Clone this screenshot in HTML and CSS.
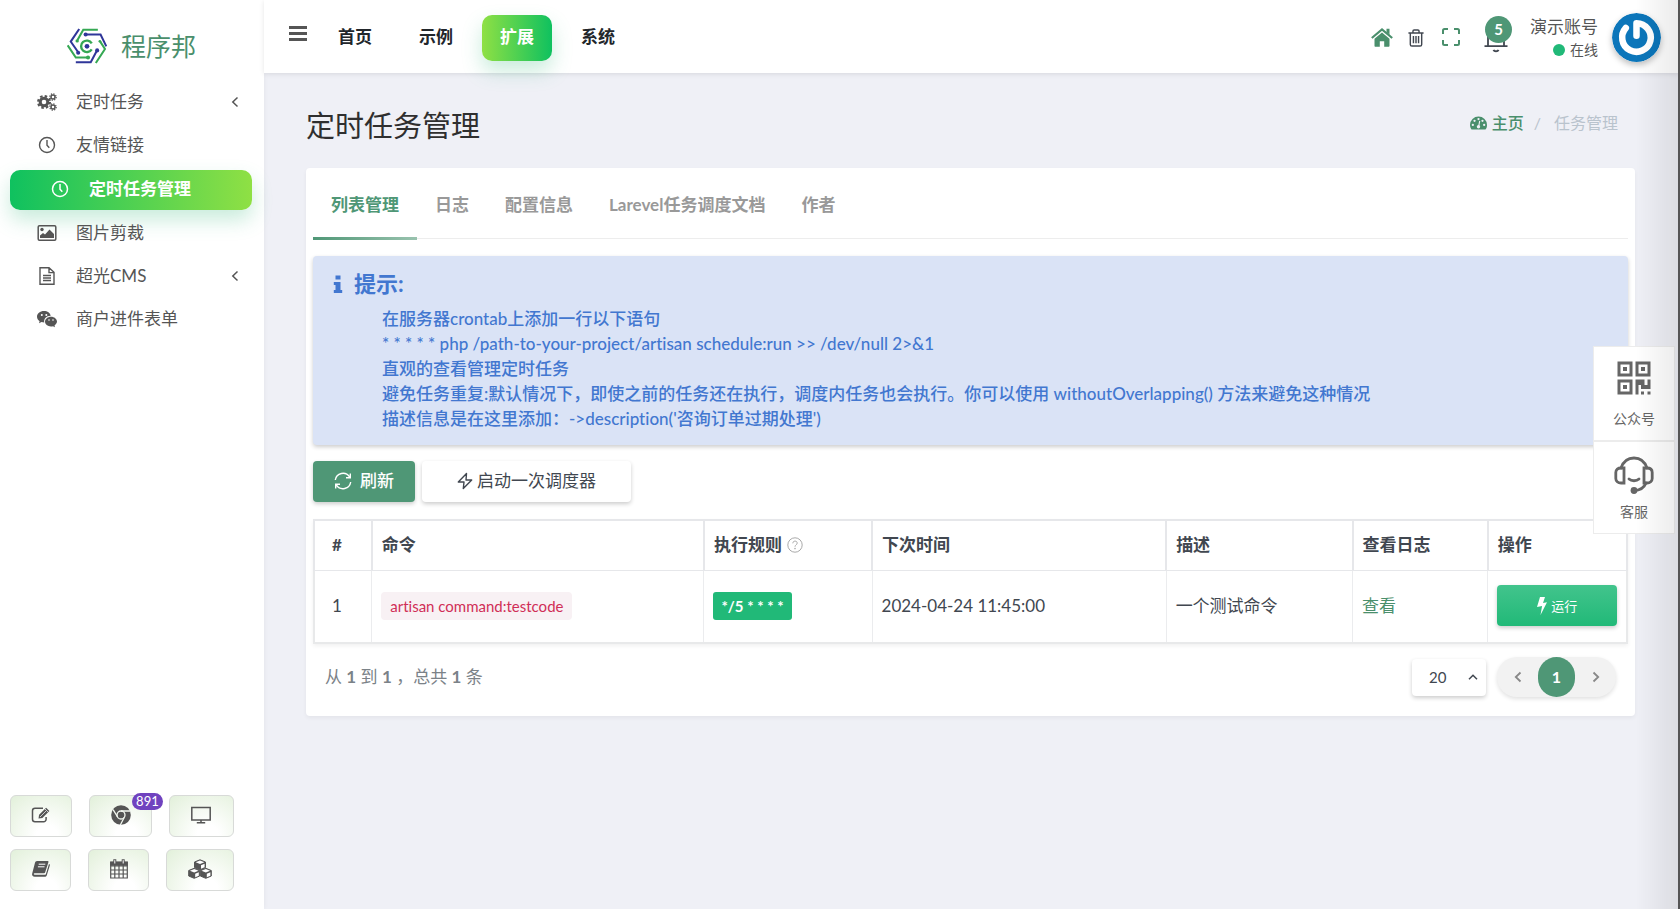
FILE: index.html
```html
<!DOCTYPE html>
<html lang="zh-CN">
<head>
<meta charset="utf-8">
<title>定时任务管理</title>
<link rel="stylesheet" href="styles.css">
</head>
<body>
<aside class="sidebar">
  <a class="brand" href="#">
    <svg class="brand-logo" viewBox="202 88 118 106" fill="none" stroke-width="6">
      <g stroke="#35a853"><path d="M293 93h-43l-17 30M204 139l24 36h33M300 128l14 22-27 41"/><path d="M275 133a17 17 0 1 0 0 18" stroke-width="7"/></g>
      <g stroke="#2f3699"><path d="M258 107h43l17 35M238 91l-25 37 21 30M228 189h44l18-34"/></g>
      <g fill="#35a853"><circle cx="232" cy="126" r="5"/><circle cx="264" cy="175" r="6"/><circle cx="299" cy="127" r="4"/></g>
      <g fill="#2f3699"><circle cx="257" cy="107" r="6"/><circle cx="235" cy="161" r="6"/><circle cx="291" cy="154" r="6"/><circle cx="261" cy="142" r="7"/></g>
    </svg>
    <span>程序邦</span>
  </a>
  <nav class="menu">
    <a class="menu-item" href="#">
      <svg class="icon" viewBox="0 0 20 18"><g fill="none" stroke="currentColor"><circle cx="7" cy="9" r="3.800" stroke-width="3"/><circle cx="7" cy="9" r="5.900" stroke-width="2.200" stroke-dasharray="2.500 2.130"/><circle cx="16" cy="4" r="2" stroke-width="1.500"/><circle cx="16" cy="4" r="3.200" stroke-width="1.200" stroke-dasharray="1.300 1.200"/><circle cx="16" cy="14" r="2" stroke-width="1.500"/><circle cx="16" cy="14" r="3.200" stroke-width="1.200" stroke-dasharray="1.300 1.200"/></g></svg>
      <span>定时任务</span>
      <svg class="chevron" viewBox="0 0 8 12"><path d="M6.500 1.500L1.800 6l4.700 4.500" fill="none" stroke="currentColor" stroke-width="1.500"/></svg>
    </a>
    <a class="menu-item" href="#">
      <svg class="icon" viewBox="0 0 20 18"><g fill="none" stroke="currentColor" stroke-width="1.400"><circle cx="10" cy="9" r="7.500"/><path d="M10 4v5.200l2.300 2.600"/></g></svg>
      <span>友情链接</span>
    </a>
    <a class="menu-item active" href="#">
      <svg class="icon" viewBox="0 0 20 18"><g fill="none" stroke="currentColor" stroke-width="1.500"><circle cx="10" cy="9" r="7.500"/><path d="M10 4v5.200l2.300 2.600"/></g></svg>
      <span>定时任务管理</span>
    </a>
    <a class="menu-item" href="#">
      <svg class="icon" viewBox="0 0 20 18"><rect x="1.200" y="1.700" width="17.600" height="14.600" rx="1.200" fill="none" stroke="currentColor" stroke-width="1.500"/><circle cx="5" cy="5.500" r="1.700" fill="currentColor"/><path d="M3 14v-2.500l3-2.500 2 1.500 4.500-5 4.500 4.500v4z" fill="currentColor"/></svg>
      <span>图片剪裁</span>
    </a>
    <a class="menu-item" href="#">
      <svg class="icon" viewBox="0 0 20 18"><g fill="none" stroke="currentColor" stroke-width="1.400"><path d="M3 .8h9l5 4.500v11.900H3zM12 .8v4.800h5M6 8.500h8M6 11h8M6 13.500h8"/></g></svg>
      <span>超光CMS</span>
      <svg class="chevron" viewBox="0 0 8 12"><path d="M6.500 1.500L1.800 6l4.700 4.500" fill="none" stroke="currentColor" stroke-width="1.500"/></svg>
    </a>
    <a class="menu-item" href="#">
      <svg class="icon" viewBox="0 0 20 18"><path d="M7 1C3 1 0 3.500 0 6.700c0 1.900 1 3.400 2.600 4.500L2 13.300l2.500-1.200c.9.300 1.700.4 2.800.4-.9-3.600 2.100-6.700 6.400-6.700C13.200 3 10.500 1 7 1z" fill="currentColor"/><path d="M14 6.700c-3.300 0-6 2.200-6 4.900s2.700 4.900 6 4.900c.7 0 1.400-.2 2-.3l2 1-.5-1.800c1.500-1 2.500-2.300 2.500-3.800 0-2.700-2.700-4.900-6-4.900z" fill="currentColor"/><g fill="#fff"><circle cx="4.800" cy="5" r="1"/><circle cx="9.300" cy="5" r="1"/><circle cx="12" cy="10" r=".8"/><circle cx="16" cy="10" r=".8"/></g></svg>
      <span>商户进件表单</span>
    </a>
  </nav>
  <div class="shortcuts">
    <div class="shortcut-row">
      <button class="shortcut" type="button" aria-label="编辑"><svg viewBox="0 0 20 18"><path d="M12 2.200H4A2.500 2.500 0 0 0 1.500 4.700v8.600A2.500 2.500 0 0 0 4 15.800h8.600a2.500 2.500 0 0 0 2.500-2.500V11" fill="none" stroke="currentColor" stroke-width="1.500"/><path d="M7.500 12.500l.6-3.800 7-7 3.300 3.200-7 7z" fill="currentColor"/><path d="M14 3l3.200 3.200M9 11l6-6" stroke="#fff" stroke-width=".7"/></svg></button>
      <button class="shortcut" type="button" aria-label="浏览器"><svg class="round" viewBox="0 0 20 20"><circle cx="10" cy="10" r="9.800" fill="currentColor"/><g fill="none" stroke="#f4f9f1" stroke-width="1.300"><circle cx="10" cy="10" r="4"/><path d="M10 6h9M6.600 12L2.100 4.600M13.300 12.200L9.300 20"/></g></svg><span class="count">891</span></button>
      <button class="shortcut wide" type="button" aria-label="显示器"><svg viewBox="0 0 20 18"><path d="M.8 1.500h18.400v12.600H.8zM10 14v2.500M5.800 16.700h8.400" fill="none" stroke="currentColor" stroke-width="1.500"/></svg></button>
    </div>
    <div class="shortcut-row lower">
      <button class="shortcut" type="button" aria-label="文档"><svg viewBox="0 0 20 18"><path d="M6 1h10.500c.8 0 1.100.5.900 1.200l-3.200 10c-.2.700-.8 1-1.500 1H3.500c-1 0-1 1.600.2 1.600h10c.6 0 1-.3 1.200-.9L18 4c.8.300 1 .8.800 1.500l-3 9.700c-.3 1-1.200 1.600-2.200 1.600H3.800c-2 0-3.200-1.600-2.600-3.300L4 2.800C4.300 1.700 5 1 6 1z" fill="currentColor"/><path d="M7.700 4.200h6.600M6.900 6.800h6.600" stroke="#fff" stroke-width="1"/></svg></button>
      <button class="shortcut" type="button" aria-label="日历"><svg class="round" viewBox="0 0 20 20"><path d="M1.700 3h16.600v16H1.700zM1.700 7h16.600M1.700 11h16.600M1.700 15h16.600M5.800 6v13M10 6v13M14.200 6v13" fill="none" stroke="currentColor" stroke-width="1.200"/><path d="M1.200 2.800h17.600v4H1.200z" fill="currentColor"/><path d="M5.800.3v4.500M14.200.3v4.500" stroke="currentColor" stroke-width="3"/><path d="M5.800 1.200v3.300M14.200 1.200v3.300" stroke="#fff"/></svg></button>
      <button class="shortcut wide" type="button" aria-label="模块"><svg class="cubes" viewBox="0 0 24 20"><g fill="currentColor" stroke="currentColor" stroke-linejoin="round"><path d="M12 .8l5.500 2.200v5.500L12 11 6.500 8.500V3zM6.200 9.300L11.700 11.500V17l-5.500 2.300L.7 17v-5.500zM17.800 9.300l5.500 2.200V17l-5.500 2.300-5.500-2.300v-5.500z"/></g><g fill="#fff"><path d="M12 1.600l4.300 1.700L12 5 7.700 3.300zM6.200 10.100l4.300 1.700-4.300 1.700-4.300-1.700zM17.800 10.100l4.300 1.700-4.300 1.700-4.300-1.700zM13 6.300l3.600-1.500v3.400L13 9.800zM7.200 14.800l3.600-1.500v3.400l-3.600 1.600zM18.800 14.800l3.600-1.500v3.400l-3.600 1.600z"/></g></svg></button>
    </div>
  </div>
</aside>
<div class="page">
  <header class="topbar">
    <button class="toggle" type="button" aria-label="菜单"><svg viewBox="0 0 18 16"><path d="M0 1.500h18M0 7.500h18M0 13.500h18" stroke="currentColor" stroke-width="2.800"/></svg></button>
    <nav class="topnav">
      <a href="#">首页</a>
      <a href="#">示例</a>
      <a class="current" href="#">扩展</a>
      <a href="#">系统</a>
    </nav>
    <div class="tools">
      <a class="tool green" href="#" aria-label="主页"><svg class="home" viewBox="0 0 22 19"><path d="M11 4.600l7.500 6.200v7c0 .6-.4 1-1 1h-4.300v-5.600H8.800v5.600H4.500c-.6 0-1-.4-1-1v-7z" fill="currentColor"/><path d="M.8 10L11 1.500 21.200 10" fill="none" stroke="currentColor" stroke-width="2.200"/><path d="M15.500.8h3v6l-3-2.500z" fill="currentColor"/></svg></a>
      <a class="tool" href="#" aria-label="清空"><svg class="trash" viewBox="0 0 16 19"><path d="M0 4.200h16M4.800 4V2.200c0-.7.500-1.200 1.200-1.200h4c.7 0 1.200.5 1.200 1.200V4M2 4.500v11.800c0 1 .7 1.700 1.700 1.700h8.600c1 0 1.700-.7 1.700-1.700V4.500M5.300 7.500v7.500M8 7.500v7.500M10.700 7.500v7.500" fill="none" stroke="currentColor" stroke-width="1.500"/></svg></a>
      <a class="tool green" href="#" aria-label="全屏"><svg class="full" viewBox="0 0 18 18"><path d="M1 6V2.500Q1 1 2.500 1H6M12 1h3.500Q17 1 17 2.500V6M17 12v3.500q0 1.500-1.500 1.500H12M6 17H2.500Q1 17 1 15.500V12" fill="none" stroke="currentColor" stroke-width="2"/></svg></a>
      <a class="tool bell-link" href="#" aria-label="通知"><svg class="bell" viewBox="0 0 24 30"><path d="M4 22.500V11a8 8 0 0 1 16 0v11.500M.5 23.200h23" fill="none" stroke="currentColor" stroke-width="1.800"/><path d="M9.500 26.800c.8 2 4.200 2 5 0" fill="none" stroke="currentColor" stroke-width="2"/></svg><span class="notice">5</span></a>
      <a class="user" href="#">
        <span class="user-text"><span class="user-name">演示账号</span><span class="user-state"><i class="dot"></i>在线</span></span>
        <svg class="avatar" viewBox="0 0 48 48"><circle cx="24" cy="24" r="24" fill="#0c76ba"/><path d="M24 22.200V10a14 14 0 1 1-10.500 4.700" fill="none" stroke="#fff" stroke-width="6.400" stroke-linecap="round" stroke-linejoin="round"/></svg>
      </a>
    </div>
  </header>
  <main class="content">
    <div class="heading">
      <h1>定时任务管理</h1>
      <nav class="crumbs">
        <a href="#"><svg viewBox="0 0 18 14"><path d="M9 0a9 9 0 0 1 9 9c0 1.700-.5 3.300-1.300 4.600l-.6.400H1.900l-.6-.4A8.800 8.800 0 0 1 0 9a9 9 0 0 1 9-9z" fill="currentColor"/><g fill="#eff0f6"><circle cx="3" cy="9" r="1.200"/><circle cx="4.800" cy="4.700" r="1.200"/><circle cx="9" cy="2.800" r="1.200"/><circle cx="13.200" cy="4.700" r="1.200"/><circle cx="15" cy="9" r="1.200"/></g><path d="M10.300 4.700L9 11.500" stroke="#eff0f6" stroke-width="1.200"/><circle cx="9" cy="11" r="1.800" fill="#eff0f6"/></svg>主页</a>
        <span class="slash">/</span>
        <span>任务管理</span>
      </nav>
    </div>
    <section class="card">
      <nav class="tabs">
        <a class="selected" href="#">列表管理</a>
        <a href="#">日志</a>
        <a href="#">配置信息</a>
        <a href="#">Larevel任务调度文档</a>
        <a href="#">作者</a>
      </nav>
      <div class="alert">
        <h2><svg viewBox="0 0 10 20"><path d="M2.500 1.500h5v4h-5zM.8 8h6.700v8h1.700v3H.8v-3h1.700v-5H.8z" fill="currentColor"/></svg>提示:</h2>
        <ul>
          <li>在服务器crontab上添加一行以下语句</li>
          <li>* * * * * php /path-to-your-project/artisan schedule:run &gt;&gt; /dev/null 2&gt;&amp;1</li>
          <li>直观的查看管理定时任务</li>
          <li>避免任务重复:默认情况下，即使之前的任务还在执行，调度内任务也会执行。你可以使用 withoutOverlapping() 方法来避免这种情况</li>
          <li>描述信息是在这里添加：-&gt;description('咨询订单过期处理')</li>
        </ul>
      </div>
      <div class="actions">
        <button class="btn primary" type="button"><svg viewBox="0 0 18 18"><path d="M1.300 8a7.800 7.800 0 0 1 14.200-3.200M16.700 10a7.800 7.800 0 0 1-14.200 3.200M16.300 1.500v4.300H12M1.700 16.500v-4.300H6" fill="none" stroke="currentColor" stroke-width="1.400"/></svg>刷新</button>
        <button class="btn plain" type="button"><svg viewBox="0 0 16 18"><path d="M9.500 1.500L1.300 10H7l-.7 6.500L14.700 8H9z" fill="none" stroke="currentColor" stroke-width="1.400" stroke-linejoin="round"/></svg>启动一次调度器</button>
      </div>
      <table class="grid">
        <colgroup><col class="c1"><col class="c2"><col class="c3"><col class="c4"><col class="c5"><col class="c6"><col class="c7"></colgroup>
        <thead>
          <tr><th>#</th><th>命令</th><th><span class="with-help">执行规则<svg viewBox="0 0 16 16"><circle cx="8" cy="8" r="7.200" fill="none" stroke="currentColor"/><path d="M5.800 6.300c0-3 4.500-2.800 4.400-.2C10.200 7.800 8 7.900 8 9.700" fill="none" stroke="currentColor"/><circle cx="8" cy="11.600" r=".8" fill="currentColor"/></svg></span></th><th>下次时间</th><th>描述</th><th>查看日志</th><th>操作</th></tr>
        </thead>
        <tbody>
          <tr><td>1</td><td><code>artisan command:testcode</code></td><td><span class="rule">*/5 * * * *</span></td><td>2024-04-24 11:45:00</td><td>一个测试命令</td><td><a href="#">查看</a></td><td><button class="run" type="button"><svg viewBox="0 0 10 18"><path d="M3 0h5L6 6l4-.8L3.500 18l1.600-9L0 10z" fill="currentColor"/></svg>运行</button></td></tr>
        </tbody>
      </table>
      <div class="table-foot">
        <p>从 <b>1</b> 到 <b>1</b> ，总共 <b>1</b> 条</p>
        <div class="pager">
          <select class="per-page" aria-label="每页条数"><option>20</option></select>
          <div class="pages">
            <button type="button" aria-label="上一页"><svg viewBox="0 0 8 12"><path d="M6.500 1.500L1.800 6l4.700 4.500" fill="none" stroke="currentColor" stroke-width="1.800"/></svg></button>
            <button class="on" type="button">1</button>
            <button type="button" aria-label="下一页"><svg viewBox="0 0 8 12"><path d="M1.500 1.500L6.200 6l-4.700 4.500" fill="none" stroke="currentColor" stroke-width="1.800"/></svg></button>
          </div>
        </div>
      </div>
    </section>
  </main>
</div>
<aside class="dock">
  <a href="#"><svg viewBox="0 0 34 34"><g fill="none" stroke="currentColor" stroke-width="3"><rect x="2" y="2" width="12" height="12"/><rect x="20" y="2" width="12" height="12"/><rect x="2" y="20" width="12" height="12"/></g><g fill="currentColor"><path d="M6 6h4v4H6zM24 6h4v4h-4zM6 24h4v4H6zM18.500 18.500h9V24h3v-5.500h3V28H24v-4h-2.500v9.500h-3zM24 30.500h3v3h-3zM30.500 30.500h3v3h-3z"/></g></svg><span>公众号</span></a>
  <a href="#"><svg class="headset" viewBox="0 0 40 38"><g fill="none" stroke="currentColor" stroke-width="2.800" stroke-linecap="round"><path d="M7 12C9.500 5 14 2 20 2s10.500 3 13 10M32 27c-2 5-6 7.500-12 7.500"/><path d="M10 12v15H7c-3 0-5.200-2-5.200-4.500v-6C1.800 13.500 4 12 7 12zM30 12v15h3c3 0 5.200-2 5.200-4.500v-6C38.200 13.500 36 12 33 12zM15 23c2.500 2.300 7.500 2.300 10 0"/></g><circle cx="20" cy="34.500" r="3.400" fill="currentColor"/></svg><span>客服</span></a>
</aside>
<div class="edge"></div>
</body>
</html>
```

FILE: styles.css
```css
* { box-sizing: border-box; }
body {
  margin: 0;
  min-height: 100vh;
  display: flex;
  background: #eff0f6;
  color: #414750;
  font: 17px/24px Lato, "Noto Sans CJK SC", sans-serif;
  font-variant-ligatures: none;
}
a { color: inherit; text-decoration: none; }
button, select { font: inherit; color: inherit; border: 0; cursor: pointer; }
svg { display: block; flex: none; }
h1, h2, p, ul { margin: 0; padding: 0; }

.sidebar {
  width: 264px;
  flex: none;
  display: flex;
  flex-direction: column;
  background: #fff;
  color: #555;
  box-shadow: 0 0 5px rgba(0, 0, 0, .06);
}
.brand {
  height: 83px;
  padding: 8px 0 0 67px;
  display: flex;
  align-items: center;
  gap: 14px;
  color: #4a8f6c;
  font-size: 25px;
}
.brand-logo { width: 40px; height: 36px; }
.menu { display: flex; flex-direction: column; gap: 3px; padding: 0 12px 0 10px; }
.menu-item {
  height: 40px;
  padding: 0 13px 2px 27px;
  display: flex;
  align-items: center;
  gap: 19px;
  border-radius: 10px;
}
.icon { width: 20px; height: 18px; }
.chevron { width: 8px; height: 12px; margin-left: auto; }
.menu-item.active {
  margin: 1px 0;
  padding-left: 40px;
  color: #fff;
  font-weight: 700;
  background: linear-gradient(90deg, #0fc15f, #8fe044);
  box-shadow: 0 10px 20px rgba(60, 185, 130, .28);
}
.shortcuts {
  margin-top: auto;
  padding: 0 30px 18px 10px;
  display: flex;
  flex-direction: column;
  gap: 12px;
}
.shortcut-row { display: flex; gap: 17px; }
.shortcut {
  position: relative;
  flex: 62;
  height: 42px;
  padding: 0 0 2px;
  display: flex;
  align-items: center;
  justify-content: center;
  border: 1px solid #d8dad8;
  border-radius: 6px;
  background: radial-gradient(circle at 60% 100%, #fff 20%, #e2f0da);
}
.shortcut.wide { flex: 65; }
.shortcut svg { width: 20px; height: 18px; }
.shortcut .round { height: 20px; }
.shortcut .cubes { width: 24px; height: 20px; }
.lower .shortcut { flex: 61; }
.lower .wide { flex: 68; }
.count {
  position: absolute;
  top: -3px;
  right: -12px;
  padding: 0 4px;
  border-radius: 9px;
  background: #7042bf;
  color: #fff;
  font-size: 13px;
  line-height: 17px;
}

.page { flex: 1; min-width: 0; }
.topbar {
  height: 73px;
  padding: 2px 19px 0 25px;
  display: flex;
  align-items: center;
  background: #fff;
  box-shadow: 0 1px 5px rgba(0, 0, 0, .1);
}
.toggle { padding: 0; margin-bottom: 8px; background: none; color: #555; }
.toggle svg { width: 18px; height: 16px; }
.topnav { display: flex; gap: 11px; margin-left: 13px; color: #22262b; font-weight: 700; }
.topnav a { padding: 10px 18px 12px; border-radius: 10px; }
.topnav .current {
  color: #fff;
  background: linear-gradient(90deg, #8fe044, #0fc15f);
  box-shadow: 0 10px 20px rgba(60, 185, 130, .28);
}
.tools { margin-left: auto; display: flex; align-items: center; gap: 15px; color: #414750; }
.green { color: #4a8f6c; }
.home { width: 22px; height: 19px; }
.trash { width: 16px; height: 18px; }
.full { width: 18px; height: 18px; margin: 0 2px 2px 3px; }
.bell-link { position: relative; margin: 0 7px; }
.bell { width: 24px; height: 30px; }
.notice {
  position: absolute;
  top: -7px;
  left: 1px;
  width: 27px;
  height: 27px;
  border-radius: 50%;
  background: #4f9776;
  color: #fff;
  font-size: 15px;
  font-weight: 700;
  line-height: 27px;
  text-align: center;
}
.user { display: flex; align-items: center; gap: 14px; color: #555; }
.user-text { display: flex; flex-direction: column; align-items: flex-end; }
.user-state { display: flex; align-items: center; gap: 5px; font-size: 14px; line-height: 22px; }
.dot { width: 12px; height: 12px; border-radius: 50%; background: #21b978; }
.avatar { width: 49px; height: 49px; border-radius: 50%; box-shadow: 0 3px 6px rgba(0, 0, 0, .25); }

.content { padding: 31px 45px 40px 42px; }
.heading { display: flex; justify-content: space-between; align-items: flex-start; height: 64px; padding-right: 17px; }
h1 { color: #2f2f2f; font-size: 29px; font-weight: 400; line-height: 44px; }
.crumbs { display: flex; gap: 10px; padding-top: 7px; color: #b9c3cd; font-size: 16px; }
.crumbs a { display: flex; align-items: center; gap: 5px; color: #4a8f6c; font-weight: 500; }
.crumbs svg { width: 17px; height: 14px; }
.slash { margin-right: 3px; }
.card { padding: 0 7px 16px; border-radius: 4px; background: #fff; box-shadow: 0 2px 4px rgba(0, 0, 0, .05); }
.tabs { display: flex; border-bottom: 1px solid #ededed; color: #999; font-weight: 700; }
.tabs a { height: 70px; padding: 25px 18px 0; }
.tabs .selected {
  height: 72px;
  margin-bottom: -2px;
  color: #4f9776;
  border-bottom: 3px solid;
  border-image: linear-gradient(90deg, #4f9776, #9ac3af) 1;
}
.alert {
  margin-top: 17px;
  padding: 14px 20px 14px;
  border-radius: 4px;
  background: #dae3f6;
  color: #4277d0;
  font-weight: 500;
  box-shadow: 0 2px 4px rgba(0, 0, 0, .2);
}
h2 { display: flex; align-items: center; gap: 11px; font-size: 22px; font-weight: 700; line-height: 27px; }
h2 svg { width: 10px; height: 20px; }
.alert ul { margin-top: 9px; padding-left: 49px; list-style: none; line-height: 25px; }
.actions { display: flex; gap: 7px; margin: 16px 0 17px; }
.btn {
  height: 41px;
  padding: 0 21px 2px;
  display: flex;
  align-items: center;
  border-radius: 4px;
  box-shadow: 0 2px 4px rgba(0, 0, 0, .2);
}
.btn svg { width: 18px; height: 18px; }
.primary { gap: 8px; background: #4f9776; color: #fff; font-weight: 500; }
.plain { gap: 4px; padding: 0 35px 2px; background: #fff; }
.plain svg { width: 16px; }
.grid {
  width: 100%;
  table-layout: fixed;
  border-collapse: collapse;
  border: 2px solid #e8e9ea;
  box-shadow: 0 2px 4px rgba(0, 0, 0, .06);
  color: #414750;
}
.c1 { width: 4.4%; }
.c2 { width: 25.3%; }
.c3 { width: 12.8%; }
.c4 { width: 22.4%; }
.c5 { width: 14.2%; }
.c6 { width: 10.3%; }
.c7 { width: 10.6%; }
th, td { padding: 0 9px; text-align: left; border: 1px solid #ebecee; }
th { height: 50px; padding-bottom: 1px; border-width: 2px; border-bottom-width: 1px; border-color: #e6e7ea; font-weight: 700; }
td { height: 73px; padding-bottom: 1px; }
th:first-child, td:first-child { padding-left: 17px; }
td a { color: #4a8f6c; }
.with-help { display: flex; align-items: center; gap: 5px; }
.with-help svg { width: 16px; height: 16px; color: #aaa; }
code { display: inline-block; padding: 2px 9px; border-radius: 4px; background: #f8f1f4; color: #d02e57; font: inherit; font-size: 15px; }
.rule { display: inline-block; padding: 2px 8px; border-radius: 3px; background: #21b978; color: #fff; font-size: 15px; font-weight: 700; }
.run {
  width: 100%;
  height: 41px;
  padding: 0;
  display: flex;
  align-items: center;
  justify-content: center;
  gap: 4px;
  border-radius: 4px;
  background: linear-gradient(#42c48c, #21b978);
  box-shadow: 0 2px 4px rgba(0, 0, 0, .2);
  color: #fff;
  font-size: 13px;
}
.run svg { width: 10px; height: 18px; }
.table-foot { display: flex; justify-content: space-between; align-items: center; padding: 10px 12px 0 12px; min-height: 56px; color: #7b8288; }
.pager { display: flex; align-items: center; gap: 11px; }
.per-page {
  width: 74px;
  height: 37px;
  padding: 0 17px;
  appearance: none;
  border-radius: 4px;
  background: #fff url("data:image/svg+xml,%3Csvg xmlns='http://www.w3.org/2000/svg' viewBox='0 0 10 6'%3E%3Cpath d='M1 5.200l4-4 4 4' fill='none' stroke='%23414750' stroke-width='1.500'/%3E%3C/svg%3E") no-repeat right 8px center / 10px 6px;
  box-shadow: 0 2px 4px rgba(0, 0, 0, .2);
  color: #414750;
  font-size: 15px;
}
.pages { display: flex; align-items: center; height: 40px; border-radius: 20px; background: #f2f2f2; box-shadow: 0 2px 4px rgba(0, 0, 0, .12); }
.pages button { width: 41px; height: 40px; padding: 0; display: flex; align-items: center; justify-content: center; background: none; color: #888; }
.pages svg { width: 8px; height: 12px; }
.pages .on { width: 37px; border-radius: 19px; background: #4f9776; color: #fff; font-size: 16px; font-weight: 700; }

.dock { position: fixed; top: 346px; right: 5px; width: 82px; border: 1px solid #ececec; background: #fff; color: #666; }
.dock a { height: 93px; padding-top: 14px; display: flex; flex-direction: column; align-items: center; gap: 12px; font-size: 14px; }
.dock a + a { border-top: 2px solid #ececec; }
.dock svg { width: 34px; height: 34px; }
.dock .headset { width: 40px; height: 38px; margin-bottom: -6px; }
.edge {
  position: fixed;
  inset: 0 0 0 auto;
  width: 44px;
  border-right: 2px solid #555;
  background: linear-gradient(90deg, rgba(0, 0, 0, 0), rgba(0, 0, 0, .08));
  pointer-events: none;
}
```
